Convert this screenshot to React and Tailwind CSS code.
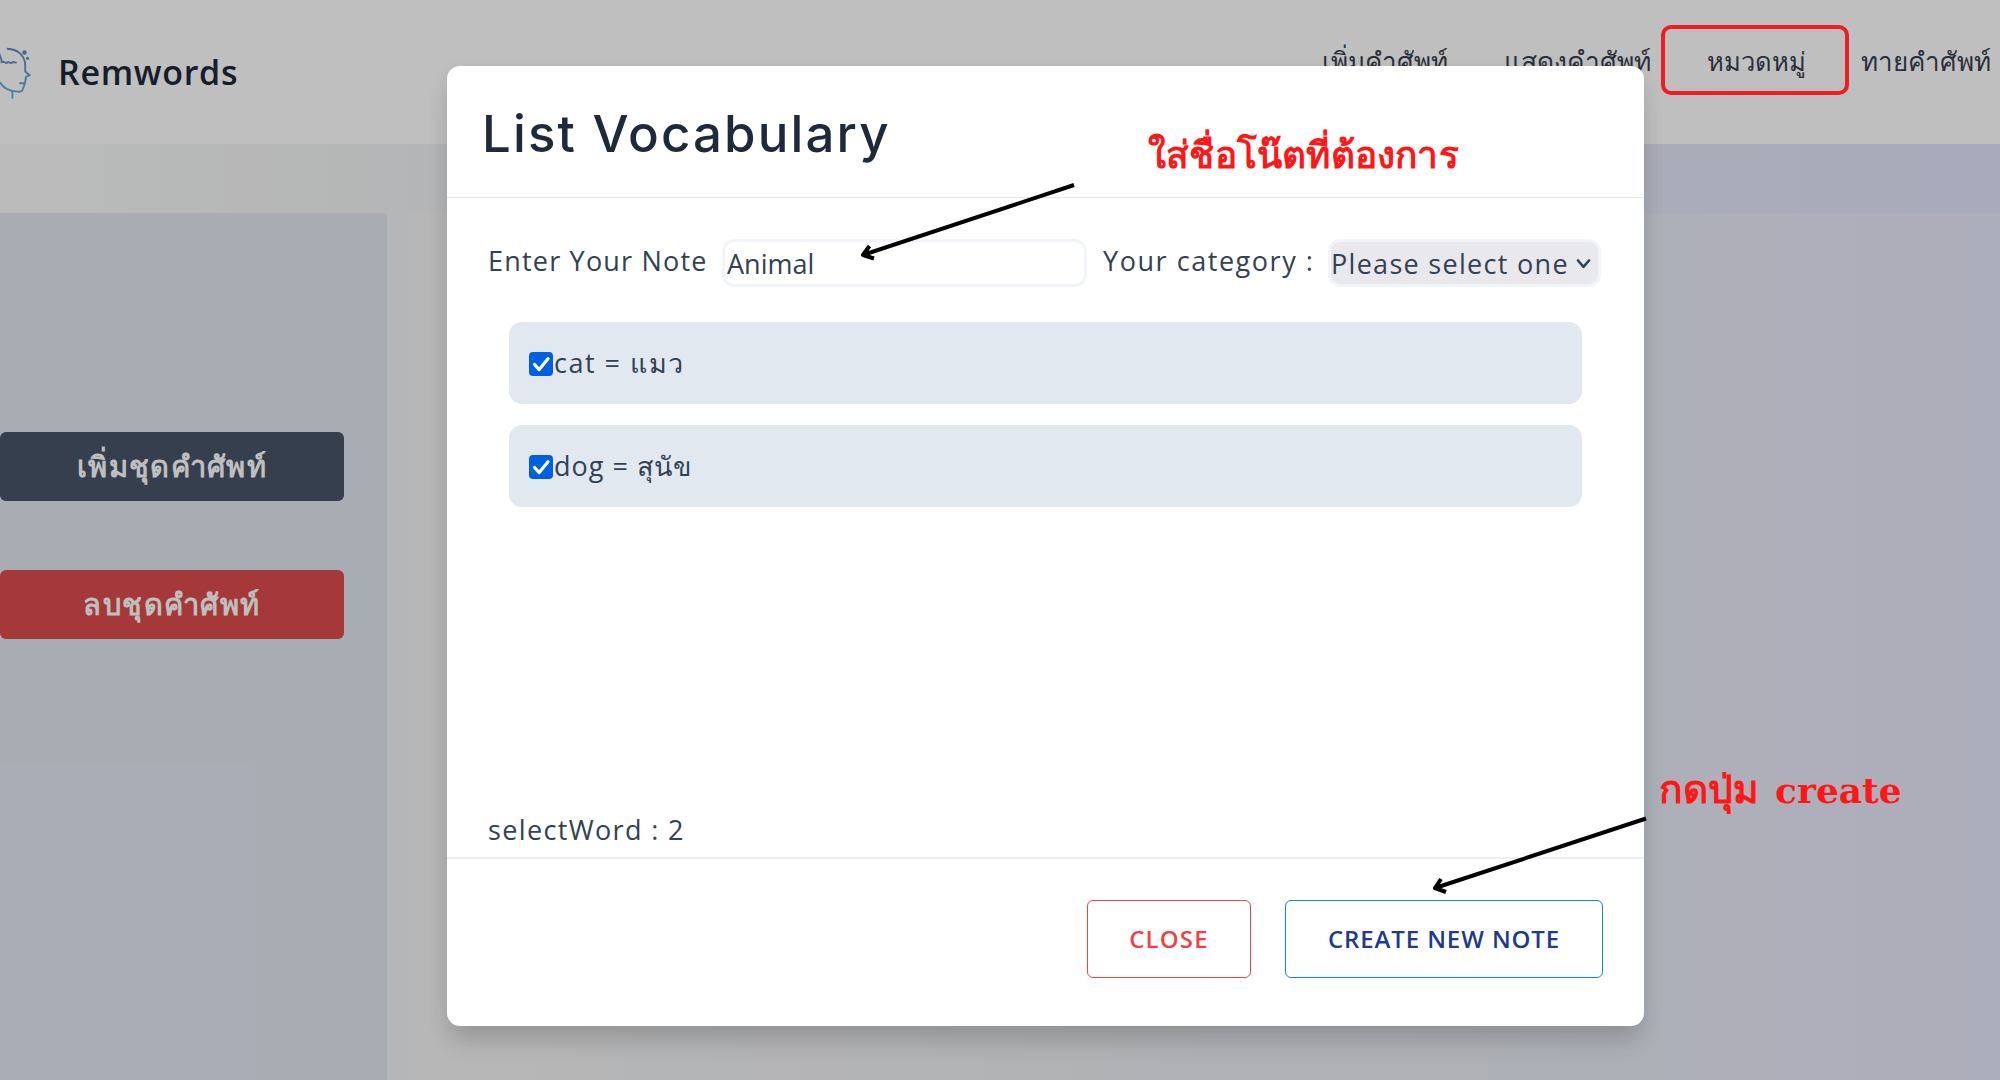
import { useState } from "react";

const NAV_ITEMS = [
  { label: "เพิ่มคำศัพท์", width: "w-[182px]", size: "text-[26px]" },
  { label: "แสดงคำศัพท์", width: "w-[203px]", size: "text-[26.4px]" },
  { label: "หมวดหมู่", width: "w-[154px]", size: "text-[25.5px]" },
  { label: "ทายคำศัพท์", width: "w-[138px]", size: "text-[26px]" },
];

const WORDS = [
  { word: "cat", meaning: "แมว", spacing: "tracking-[1.5px]" },
  { word: "dog", meaning: "สุนัข", spacing: "tracking-[1px]" },
];

function Logo() {
  return (
    <svg width="34" height="56" viewBox="0 45 34 56" fill="none" stroke="url(#head)" strokeWidth="1.9" strokeLinecap="round" strokeLinejoin="round">
      <defs>
        <linearGradient id="head" gradientUnits="userSpaceOnUse" x1="0" y1="47" x2="0" y2="98">
          <stop offset="0" stopColor="#6284bd" />
          <stop offset="1" stopColor="#66b4dc" />
        </linearGradient>
      </defs>
      <path d="M7.5 48.8C17 49.2 25.2 55 25.2 65.5V71.5L29.7 75.2L26 76.8L25.4 80.5L24 86L22.3 90.5Q21.5 92 17 91.6C9 91 3 87.5 0 82.5" />
      <path d="M20 83.2H25M12.4 91.5V98" />
      <path d="M-1 53L1.5 60V62.2L4 61.8L6 63L8.5 62L11 63.2L13 62L16 62.6" />
      <circle cx="24.5" cy="52.4" r="1.3" fill="#6284bd" />
      <circle cx="27.6" cy="58.3" r=".7" fill="#6284bd" />
    </svg>
  );
}

function Checkbox({ checked, onChange }) {
  return (
    <button role="checkbox" aria-checked={checked} onClick={onChange} className="mt-[2px] flex size-6 shrink-0 items-center justify-center rounded-[4px] bg-[#0060df]">
      {checked && (
        <svg viewBox="0 0 24 24" className="size-6" fill="none" stroke="white" strokeWidth="3.2" strokeLinecap="round" strokeLinejoin="round">
          <path d="M5.5 12.5L10.2 17.6L19 6.8" />
        </svg>
      )}
    </button>
  );
}

function Page() {
  return (
    <div className="flex h-full flex-col bg-linear-to-r from-[#f8f9f8] via-[#e8eaee] via-50% to-[#e1e4fb]">
      <header className="flex h-36 shrink-0 bg-white">
        <div className="flex h-36 w-[1322px] items-center">
          <div className="w-[58px] pt-[2px]">
            <Logo />
          </div>
          <span className="text-[34px] font-semibold tracking-[0.7px] text-[#1e293b]">Remwords</span>
        </div>
        <nav className="flex pt-[41px] leading-10 text-[#374151]">
          {NAV_ITEMS.map((item) => (
            <a key={item.label} className={`${item.width} ${item.size} whitespace-nowrap`}>
              {item.label}
            </a>
          ))}
        </nav>
      </header>
      <div className="mt-[69px] flex flex-1">
        <aside className="flex w-[387px] flex-col gap-[69px] bg-[#e1e7f1] pt-[219px]">
          <button className="h-[69px] w-[344px] rounded-md bg-[#475569] pb-[2px] text-[29px] font-semibold tracking-[1.3px] text-white">เพิ่มชุดคำศัพท์</button>
          <button className="h-[69px] w-[344px] rounded-md bg-[#dd4c4c] pb-[2px] text-[29px] font-semibold tracking-[1.4px] text-white">ลบชุดคำศัพท์</button>
        </aside>
        <section className="ml-[21px] flex-1 bg-linear-to-r from-[#f5f5f5] via-[#ebedf1] via-50% to-[#e7e9fa]" />
      </div>
    </div>
  );
}

function Modal() {
  const [checked, setChecked] = useState([true, true]);
  const toggle = (i) => setChecked(checked.map((c, j) => (i === j ? !c : c)));
  return (
    <div className="mt-[66px] ml-[447px] flex h-[960px] w-[1197px] flex-col rounded-[13px] bg-white text-[27px] text-[#334155] shadow-[0_20px_26px_-5px_rgba(0,0,0,0.12),0_8px_22px_rgba(0,0,0,0.08)]">
      <div className="h-[132px] shrink-0 border-b border-[#e2e6ee] pt-8 pl-[35px]">
        <h3 className="font-['Inter'] text-[51px] leading-[72px] font-medium tracking-[2.1px] text-[#1e293b]">List Vocabulary</h3>
      </div>
      <div className="flex flex-1 flex-col">
        <div className="mt-[41px] flex h-12 items-start pl-[41px]">
          <label className="w-[234px] pt-px leading-[41px] tracking-[1.2px] whitespace-nowrap">Enter Your Note</label>
          <div className="h-12 w-[365px] rounded-xl border-[3px] border-slate-100 pl-0.5 leading-[43px]">Animal</div>
          <label className="ml-4 w-[225px] pt-px leading-[41px] tracking-[1.55px] whitespace-nowrap">Your category :</label>
          <div className="flex h-12 w-[273px] items-center justify-between rounded-xl border-[3px] border-slate-100 bg-[#e9e9ed] pr-[7px] leading-[41px] tracking-[1.3px] whitespace-nowrap">
            <span>Please select one</span>
            <svg width="15" height="10" viewBox="0 0 15 10" className="mt-[2px]" fill="none" stroke="#334155" strokeWidth="2.6" strokeLinecap="round" strokeLinejoin="round">
              <path d="M2 1.5L7.5 7.8L13 1.5" />
            </svg>
          </div>
        </div>
        <ul className="mt-[35px] ml-[62px] flex w-[1073px] flex-col gap-[21px]">
          {WORDS.map((w, i) => (
            <li key={w.word} className="flex h-[82px] items-center rounded-[13px] bg-[#e1e8f0] pl-5">
              <Checkbox checked={checked[i]} onChange={() => toggle(i)} />
              <span className={`${w.spacing} pl-px leading-10 whitespace-pre`}>{`${w.word} = ${w.meaning}`}</span>
            </li>
          ))}
        </ul>
        <p className="mt-auto mb-[7px] pl-[41px] leading-10 tracking-[1.35px]">selectWord : {checked.filter(Boolean).length}</p>
      </div>
      <div className="flex h-[169px] shrink-0 justify-end gap-[34px] border-t-2 border-[#e9eff5] pt-[41px] pr-[41px] text-2xl font-semibold">
        <button className="h-[78px] w-[164px] rounded-md border border-[#ef4444] tracking-[1.2px] text-[#f43f46]">CLOSE</button>
        <button className="h-[78px] w-[318px] rounded-md border border-[#0f8bd0] tracking-[0.9px] text-[#1e3a8a]">CREATE NEW NOTE</button>
      </div>
    </div>
  );
}

function Annotations() {
  return (
    <>
      <div className="absolute top-[25px] left-[1661px] h-[70px] w-[188px] rounded-[10px] border-4 border-[#ee1c25]" />
      <svg className="pointer-events-none absolute inset-0" width="2000" height="1080" fill="none" stroke="black" strokeWidth="4" strokeLinejoin="round">
        <path d="M1074 185L863 255M869.5 246L863 255L874 258.5" />
        <path d="M1646 818.5L1435 888M1441 879L1435 888L1446 892" />
      </svg>
      <p className="absolute top-[124px] left-[1148px] text-[37px] leading-[60px] font-bold tracking-[0.2px] whitespace-nowrap text-[#ff1616]">ใส่ชื่อโน๊ตที่ต้องการ</p>
      <p className="absolute top-[758px] left-[1659px] flex items-baseline gap-[16px] leading-[60px] font-bold whitespace-nowrap text-[#ff1616]">
        <span className="text-[39px]">กดปุ่ม</span>
        <span className="font-['DejaVu_Serif'] text-[36px]">create</span>
      </p>
    </>
  );
}

export default function App() {
  return (
    <div className="relative h-[1080px] w-[2000px] overflow-hidden font-['Open_Sans',sans-serif]">
      <Page />
      <div className="absolute inset-0 bg-black/25">
        <Modal />
      </div>
      <Annotations />
    </div>
  );
}
